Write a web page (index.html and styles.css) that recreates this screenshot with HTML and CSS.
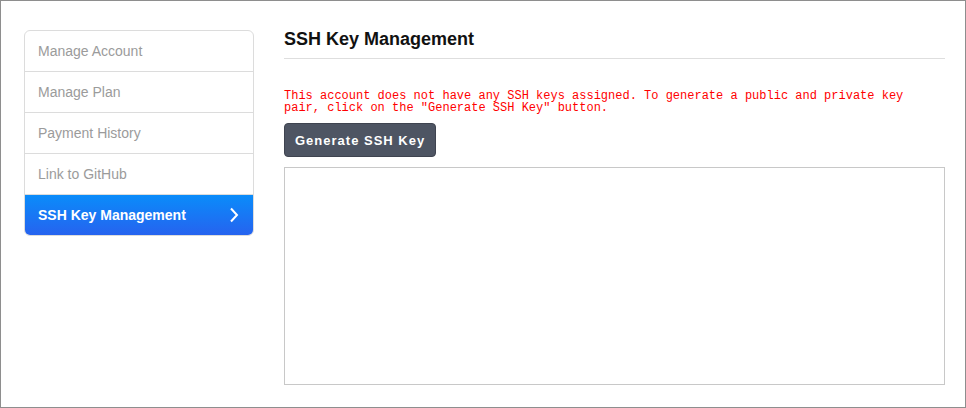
FILE: index.html
```html
<!DOCTYPE html>
<html>
<head>
<meta charset="utf-8">
<link rel="stylesheet" href="styles.css">
</head>
<body>
<div class="frame">
  <nav class="sidebar">
    <a class="item">Manage Account</a>
    <a class="item">Manage Plan</a>
    <a class="item">Payment History</a>
    <a class="item">Link to GitHub</a>
    <a class="item active">SSH Key Management
      <svg class="chev" width="10" height="16" viewBox="0 0 10 16"><path d="M2 1.5 L8 8 L2 14.5" fill="none" stroke="#fff" stroke-width="2"/></svg>
    </a>
  </nav>
  <main class="main">
    <h1 class="title">SSH Key Management</h1>
    <p class="notice">This account does not have any SSH keys assigned. To generate a public and private key pair, click on the "Generate SSH Key" button.</p>
    <button class="btn">Generate SSH Key</button>
    <textarea class="keybox"></textarea>
  </main>
</div>
</body>
</html>
```
FILE: styles.css
```css
html, body {
  margin: 0;
  padding: 0;
  background: #fff;
}
.frame {
  box-sizing: border-box;
  width: 966px;
  height: 408px;
  border: 1px solid #8e8e8e;
  padding: 29px 20px 0 23px;
  display: flex;
  gap: 30px;
  font-family: "Liberation Sans", Arial, sans-serif;
}
.sidebar {
  flex: 0 0 230px;
  box-sizing: border-box;
  align-self: flex-start;
  border: 1px solid #dcdcdc;
  border-radius: 6px;
  overflow: hidden;
  display: flex;
  flex-direction: column;
}
.item {
  display: flex;
  align-items: center;
  justify-content: space-between;
  height: 40px;
  padding: 0 13px;
  border-bottom: 1px solid #dcdcdc;
  font-size: 14px;
  color: #9b9b9b;
}
.item.active {
  border-bottom: none;
  height: 40px;
  background: linear-gradient(to bottom, #0a8cfa, #2663ef);
  color: #fff;
  font-weight: bold;
  padding-right: 14px;
}
.chev {
  display: block;
}
.main {
  flex: 1;
  display: flex;
  flex-direction: column;
  align-items: flex-start;
}
.title {
  align-self: stretch;
  margin: 0;
  font-size: 18px;
  line-height: 18px;
  font-weight: bold;
  color: #111;
  padding: 0 0 10px;
  border-bottom: 1px solid #dedede;
}
.notice {
  margin: 31px 0 0;
  font-family: "Liberation Mono", "Courier New", monospace;
  font-size: 12px;
  line-height: 12px;
  color: #ff0000;
}
.btn {
  margin-top: 9px;
  height: 34px;
  padding: 0 10px;
  background: #4e5563;
  border: 1px solid #3f4450;
  border-radius: 4px;
  color: #fff;
  font-family: "Liberation Sans", Arial, sans-serif;
  font-weight: bold;
  font-size: 13px;
  letter-spacing: 1px;
}
.keybox {
  box-sizing: border-box;
  align-self: stretch;
  margin: 10px 0 0;
  height: 218px;
  border: 1px solid #c8c8c8;
  resize: none;
  outline: none;
}
```
